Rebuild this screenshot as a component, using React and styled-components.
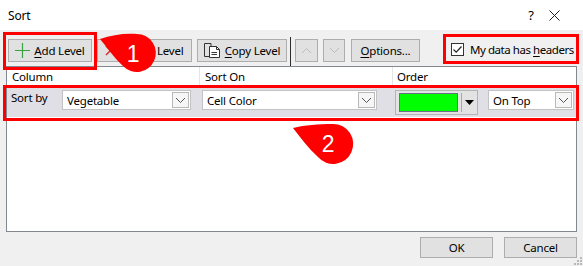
import React from "react";
import styled, { createGlobalStyle } from "styled-components";

const GlobalStyle = createGlobalStyle`
  html, body {
    margin: 0;
    padding: 0;
    background: #f0f0f0;
  }
  body {
    font-family: "Noto Sans", "Open Sans", sans-serif;
    font-size: 11.5px;
    letter-spacing: -0.2px;
    color: #000;
  }
`;

const Dialog = styled.div`
  position: relative;
  width: 583px;
  height: 266px;
  display: flex;
  flex-direction: column;
  background: #f0f0f0;
  overflow: hidden;
`;

const TitleBar = styled.div`
  height: 30px;
  background: #fff;
  display: flex;
  align-items: center;
  padding-left: 8px;
  box-sizing: border-box;
`;

const Title = styled.span`
  flex: 1;
  font-size: 12px;
`;

const TitleIcon = styled.span`
  width: ${(p) => p.w}px;
  display: flex;
  justify-content: center;
  font-size: 13px;
`;

const Toolbar = styled.div`
  height: 36px;
  box-sizing: border-box;
  display: flex;
  align-items: flex-start;
  padding: 9px 0 0 8px;
`;

const Button = styled.button`
  height: 23px;
  width: ${(p) => p.w}px;
  margin-right: ${(p) => p.gap ?? 5}px;
  box-sizing: border-box;
  border: 1px solid #adadad;
  background: #e1e1e1;
  font-family: inherit;
  font-size: inherit;
  letter-spacing: inherit;
  color: ${(p) => (p.disabled ? "#a0a0a0" : "#000")};
  display: flex;
  align-items: center;
  justify-content: center;
  gap: 4px;
  padding: 0;
  flex-shrink: 0;
`;

const Key = styled.span`
  text-decoration: underline;
  text-underline-offset: 2px;
`;

const Separator = styled.div`
  width: 1px;
  height: 29px;
  margin: -2px 4px 0 -2px;
  background: #2b2b2b;
`;

const CheckLabel = styled.label`
  display: flex;
  align-items: center;
  gap: 6px;
  margin: 3px 0 0 26px;
  white-space: nowrap;
  letter-spacing: -0.45px;
`;

const CheckBox = styled.span`
  width: 13px;
  height: 13px;
  box-sizing: border-box;
  border: 1px solid #333;
  background: #fff;
  display: flex;
  align-items: center;
  justify-content: center;
`;

const ListBox = styled.div`
  height: 166px;
  margin: 0 6px 0 6px;
  box-sizing: border-box;
  border: 1px solid #828790;
  background: #fff;
  display: flex;
  flex-direction: column;
`;

const HeaderRow = styled.div`
  display: grid;
  grid-template-columns: 193px 193px 1fr;
  height: 19px;
`;

const HeaderCell = styled.div`
  padding-left: ${(p) => p.pad}px;
  border-right: ${(p) => (p.last ? "none" : "1px solid #e5e5e5")};
  display: flex;
  align-items: center;
`;

const SortRow = styled.div`
  margin-top: 2px;
  height: 29px;
  background: #dfdfe5;
  display: flex;
  align-items: flex-start;
  padding-top: 2px;
  box-sizing: border-box;
`;

const RowLabel = styled.span`
  width: 55px;
  padding-left: 4px;
  box-sizing: border-box;
  line-height: 14px;
  margin-top: 1px;
`;

const Combo = styled.div`
  width: ${(p) => p.w}px;
  margin-right: ${(p) => p.gap}px;
  height: 20px;
  box-sizing: border-box;
  border: 1px solid #c3c3c3;
  background: #fff;
  display: flex;
  align-items: center;
  padding-left: 4px;
  flex-shrink: 0;
`;

const ComboText = styled.span`
  flex: 1;
`;

const ComboArrow = styled.span`
  width: 17px;
  height: 16px;
  margin-right: 1px;
  box-sizing: border-box;
  border: 1px solid #b9b9b9;
  background: #f6f6f6;
  display: flex;
  align-items: center;
  justify-content: center;
`;

const ColorPicker = styled.div`
  width: 83px;
  height: 25px;
  margin-right: 10px;
  box-sizing: border-box;
  border: 1px solid #b4b4b4;
  background: #e3e3e3;
  display: flex;
  align-items: center;
  padding-left: 3px;
  flex-shrink: 0;
`;

const Swatch = styled.span`
  width: 59px;
  height: 19px;
  box-sizing: border-box;
  border: 1px solid #6a6f8c;
  background: ${(p) => p.color};
`;

const PickerDivider = styled.span`
  width: 1px;
  height: 19px;
  margin-left: 3px;
  background: #a8a8a8;
`;

const PickerArrow = styled.span`
  flex: 1;
  display: flex;
  justify-content: center;
`;

const Footer = styled.div`
  flex: 1;
  display: flex;
  justify-content: flex-end;
  align-items: flex-start;
  padding: 5px 6px 0 0;
  gap: 11px;
`;

const FooterButton = styled(Button)`
  width: 73px;
  height: 21px;
  margin: 0;
`;

const Grip = styled.svg`
  position: absolute;
  right: 1px;
  bottom: 1px;
`;

const Highlight = styled.div`
  position: absolute;
  left: ${(p) => p.x}px;
  top: ${(p) => p.y}px;
  width: ${(p) => p.w}px;
  height: ${(p) => p.h}px;
  box-sizing: border-box;
  border: 3px solid #ff0000;
  pointer-events: none;
`;

const Overlay = styled.svg`
  position: absolute;
  left: 0;
  top: 0;
  pointer-events: none;
`;

const Chevron = ({ up, color = "#6d6d6d" }) => (
  <svg width="11" height="7" viewBox="0 0 11 7">
    <path
      d={up ? "M1 6 L5.5 1.5 L10 6" : "M1 1 L5.5 5.5 L10 1"}
      fill="none"
      stroke={color}
      strokeWidth="1"
    />
  </svg>
);

const ComboBox = ({ w, gap, value }) => (
  <Combo w={w} gap={gap}>
    <ComboText>{value}</ComboText>
    <ComboArrow>
      <Chevron color="#555" />
    </ComboArrow>
  </Combo>
);

const PlusIcon = () => (
  <svg width="15" height="15" viewBox="0 0 15 15">
    <path d="M7.5 0 V15 M0 7.5 H15" stroke="#3aa23f" strokeWidth="1.2" />
  </svg>
);

const DeleteIcon = () => (
  <svg width="11" height="11" viewBox="0 0 11 11">
    <path d="M1 1 L10 10 M10 1 L1 10" stroke="#d9372b" strokeWidth="1.6" />
  </svg>
);

const CopyIcon = () => (
  <svg width="17" height="15" viewBox="0 0 17 15">
    <path d="M0.5 0.5 H7 V3 M0.5 0.5 V13.5 H5" fill="none" stroke="#333" />
    <path d="M5.5 3.5 H12.5 L15.5 6.5 V14.5 H5.5 Z" fill="#fff" stroke="#333" />
    <path d="M12.5 3.5 V6.5 H15.5" fill="none" stroke="#333" />
    <path d="M7.5 9.5 H13 M7.5 11.5 H13" stroke="#333" />
  </svg>
);

const CheckMark = () => (
  <svg width="11" height="11" viewBox="0 0 11 11">
    <path d="M1.5 5.5 L4.2 8.2 L9.5 2.5" fill="none" stroke="#222" strokeWidth="1.2" />
  </svg>
);

const CloseIcon = () => (
  <svg width="11" height="11" viewBox="0 0 11 11">
    <path d="M0.5 0.5 L10.5 10.5 M10.5 0.5 L0.5 10.5" stroke="#222" strokeWidth="1" />
  </svg>
);

const callouts = [
  {
    d: "M100 39 C 112 35, 124 33, 137 34 A 19 19 0 1 1 123 66 C 114 58, 107 47, 100 39 Z",
    x: 133,
    y: 62,
    n: "1",
  },
  {
    d: "M293 128 C 305 125, 318 124, 333 124 A 20 20 0 1 1 318 157 C 308 148, 300 137, 293 128 Z",
    x: 328,
    y: 152,
    n: "2",
  },
];

export default function App() {
  return (
    <>
      <GlobalStyle />
      <Dialog>
        <TitleBar>
          <Title>Sort</Title>
          <TitleIcon w={14}>?</TitleIcon>
          <TitleIcon w={32}>
            <CloseIcon />
          </TitleIcon>
          <span style={{ width: 13 }} />
        </TitleBar>

        <Toolbar>
          <Button w={84}>
            <PlusIcon />
            <span>
              <Key>A</Key>dd Level
            </span>
          </Button>
          <Button w={95}>
            <DeleteIcon />
            <span>
              <Key>D</Key>elete Level
            </span>
          </Button>
          <Button w={90}>
            <CopyIcon />
            <span>
              <Key>C</Key>opy Level
            </span>
          </Button>
          <Separator />
          <Button w={23} disabled>
            <Chevron up color="#bcbcbc" />
          </Button>
          <Button w={22} gap={6} disabled>
            <Chevron color="#bcbcbc" />
          </Button>
          <Button w={69}>
            <span>
              <Key>O</Key>ptions...
            </span>
          </Button>
          <CheckLabel>
            <CheckBox>
              <CheckMark />
            </CheckBox>
            <span>
              My data has <Key>h</Key>eaders
            </span>
          </CheckLabel>
        </Toolbar>

        <ListBox>
          <HeaderRow>
            <HeaderCell pad={5}>Column</HeaderCell>
            <HeaderCell pad={5}>Sort On</HeaderCell>
            <HeaderCell pad={4} last>
              Order
            </HeaderCell>
          </HeaderRow>
          <SortRow>
            <RowLabel>Sort by</RowLabel>
            <ComboBox w={129} gap={11} value="Vegetable" />
            <ComboBox w={175} gap={18} value="Cell Color" />
            <ColorPicker>
              <Swatch color="#00ff00" />
              <PickerDivider />
              <PickerArrow>
                <svg width="9" height="5" viewBox="0 0 9 5">
                  <path d="M0 0 H9 L4.5 5 Z" fill="#000" />
                </svg>
              </PickerArrow>
            </ColorPicker>
            <ComboBox w={86} gap={0} value="On Top" />
          </SortRow>
        </ListBox>

        <Footer>
          <FooterButton>OK</FooterButton>
          <FooterButton>Cancel</FooterButton>
        </Footer>

        <Grip width="8" height="8" viewBox="0 0 8 8">
          {[
            [6, 0],
            [3, 3],
            [6, 3],
            [0, 6],
            [3, 6],
            [6, 6],
          ].map(([x, y]) => (
            <rect key={`${x}-${y}`} x={x} y={y} width="2" height="2" fill="#b8b8b8" />
          ))}
        </Grip>

        <Highlight x={3} y={32} w={94} h={38} />
        <Highlight x={443} y={34} w={136} h={30} />
        <Highlight x={3} y={85} w={576} h={36} />

        <Overlay width="583" height="266">
          {callouts.map((c) => (
            <g key={c.n}>
              <path d={c.d} fill="#ff0000" />
              <text
                x={c.x}
                y={c.y}
                textAnchor="middle"
                fill="#fff"
                fontSize="23"
                fontFamily="Liberation Sans, Arial, sans-serif"
              >
                {c.n}
              </text>
            </g>
          ))}
        </Overlay>
      </Dialog>
    </>
  );
}
